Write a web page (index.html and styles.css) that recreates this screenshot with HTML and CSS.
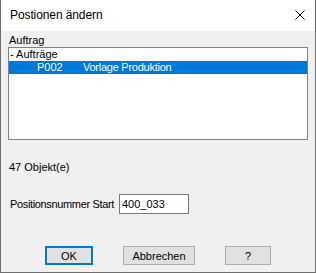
FILE: index.html
```html
<!DOCTYPE html>
<html lang="de">
<head>
<meta charset="utf-8">
<title>Postionen ändern</title>
<link rel="stylesheet" href="styles.css">
</head>
<body>
<div class="window">
  <div class="titlebar">
    <span class="title">Postionen ändern</span>
    <svg class="close" width="10" height="10" viewBox="0 0 10 10" aria-label="Schließen">
      <path d="M0.5 0.5 L9.5 9.5 M9.5 0.5 L0.5 9.5" stroke="#000" stroke-width="1" fill="none"/>
    </svg>
  </div>
  <div class="content">
    <div class="label group-label">Auftrag</div>
    <div class="listbox">
      <div class="row">- Aufträge</div>
      <div class="row selected"><span class="code">P002</span><span class="desc">Vorlage Produktion</span></div>
    </div>
    <div class="label count">47 Objekt(e)</div>
    <div class="field">
      <span class="field-label">Positionsnummer Start</span>
      <div class="textbox">400_033</div>
    </div>
    <div class="buttons">
      <div class="btn btn-ok default">OK</div>
      <div class="btn btn-cancel">Abbrechen</div>
      <div class="btn btn-help">?</div>
    </div>
  </div>
</div>
</body>
</html>
```

FILE: styles.css
```css
html, body {
  margin: 0;
  padding: 0;
  background: #ffffff;
}

body {
  font-family: "Liberation Sans", Arial, sans-serif;
  font-size: 11px;
  color: #000;
}

.window {
  width: 316px;
  height: 273px;
  box-sizing: border-box;
  border-left: 1px solid #6f6f6f;
  border-right: 1px solid #6f6f6f;
  border-bottom: 1px solid #6f6f6f;
  background: #f0f0f0;
  display: flex;
  flex-direction: column;
}

.titlebar {
  height: 31px;
  flex: none;
  background: #ffffff;
  display: flex;
  align-items: center;
  padding-left: 9px;
  padding-right: 10px;
}

.title {
  font-size: 12px;
  letter-spacing: -0.1px;
  flex: 1;
  padding-bottom: 1px;
}

.close {
  display: block;
  margin-top: -1px;
}

.content {
  padding: 0 7px;
  display: flex;
  flex-direction: column;
}

.label {
  line-height: 13px;
}

.group-label {
  height: 16px;
  box-sizing: border-box;
  padding-top: 3px;
  padding-left: 1px;
}

.listbox {
  width: 300px;
  height: 93px;
  box-sizing: border-box;
  border: 1px solid #828282;
  background: #ffffff;
}

.row {
  height: 13px;
  line-height: 13px;
  padding-left: 1px;
  display: flex;
  white-space: nowrap;
}

.row.selected {
  background: #0078d7;
  color: #ffffff;
  padding-left: 28px;
}

.code {
  width: 46px;
}

.desc {
  letter-spacing: -0.25px;
}

.count {
  margin-top: 21px;
  padding-left: 1px;
}

.field {
  margin-top: 20px;
  height: 20px;
  display: flex;
  align-items: center;
}

.field-label {
  width: 109px;
  padding-left: 2px;
  letter-spacing: -0.35px;
  line-height: 13px;
  white-space: nowrap;
}

.textbox {
  width: 70px;
  height: 20px;
  box-sizing: border-box;
  border: 1px solid #7a7a7a;
  background: #ffffff;
  padding-left: 2px;
  line-height: 18px;
}

.buttons {
  margin-top: 32px;
  padding-left: 37px;
  display: flex;
  gap: 30px;
}

.btn {
  height: 19px;
  box-sizing: border-box;
  border: 1px solid #adadad;
  background: #e1e1e1;
  display: flex;
  align-items: center;
  justify-content: center;
}

.btn.default {
  border: 2px solid #0078d7;
}

.btn-ok { width: 48px; }
.btn-cancel { width: 72px; }
.btn-help { width: 46px; }
```
